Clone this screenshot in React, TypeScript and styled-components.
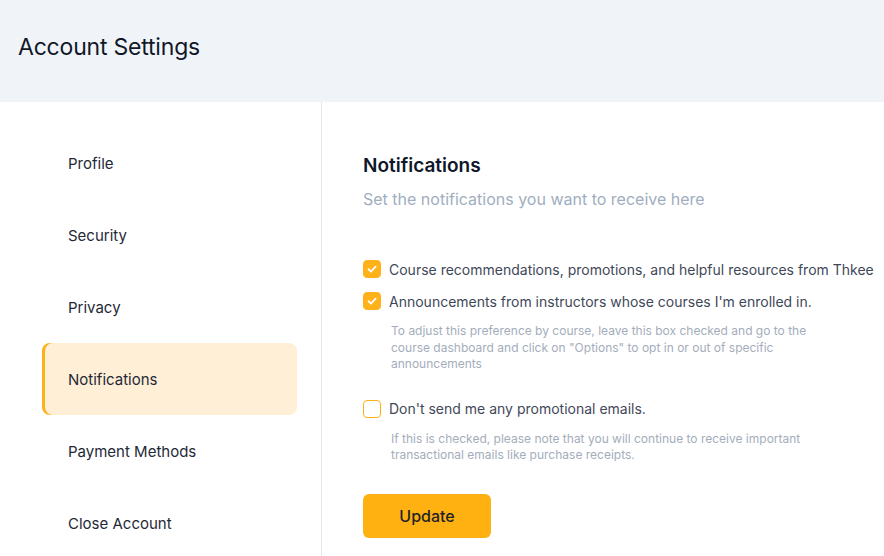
import { useState } from "react";
import styled, { createGlobalStyle } from "styled-components";

const GlobalStyle = createGlobalStyle`
    html, body {
        margin: 0;
        padding: 0;
        background: #ffffff;
        font-family: Inter, "Noto Sans", sans-serif;
    }
`;

const Page = styled.div`
    width: 884px;
    height: 556px;
    display: flex;
    flex-direction: column;
    overflow: hidden;
`;

const Header = styled.header`
    height: 102px;
    flex-shrink: 0;
    background: #f0f4f9;
    display: flex;
    align-items: center;
    padding-left: 18px;
    box-sizing: border-box;
`;

const Title = styled.h1`
    margin: 0 0 8px;
    font-size: 23px;
    font-weight: 400;
    color: #111827;
    letter-spacing: -0.2px;
`;

const Body = styled.div`
    flex: 1;
    display: flex;
`;

const Sidebar = styled.nav`
    width: 322px;
    flex-shrink: 0;
    border-right: 1px solid #e2e8f0;
    padding: 25px 24px 0 42px;
    box-sizing: border-box;
    display: flex;
    flex-direction: column;
`;

const NavItem = styled.div<{ $active?: boolean }>`
    height: 72px;
    display: flex;
    align-items: center;
    padding-left: 26px;
    border-radius: 8px;
    font-size: 15px;
    color: #1f2937;
    background: ${(p) => (p.$active ? "#ffefd6" : "transparent")};
    box-shadow: ${(p) => (p.$active ? "inset 3px 0 0 #ffb11a" : "none")};
    cursor: pointer;
`;

const Main = styled.main`
    flex: 1;
    padding: 50px 0 0 41px;
`;

const SectionTitle = styled.h2`
    margin: 0;
    font-size: 19px;
    font-weight: 600;
    color: #0f172a;
    line-height: 28px;
`;

const Subtitle = styled.p`
    margin: 8px 0 0;
    font-size: 16px;
    color: #a0aec0;
    line-height: 22px;
`;

const Options = styled.div`
    margin-top: 43px;
    display: flex;
    flex-direction: column;
`;

const OptionRow = styled.label`
    display: flex;
    align-items: center;
    gap: 8px;
    height: 32px;
    font-size: 14px;
    color: #3f4858;
    white-space: nowrap;
    cursor: pointer;
`;

const Box = styled.span<{ $checked: boolean }>`
    width: 18px;
    height: 18px;
    box-sizing: border-box;
    border-radius: 4px;
    flex-shrink: 0;
    display: flex;
    align-items: center;
    justify-content: center;
    background: ${(p) => (p.$checked ? "#ffb11a" : "#ffffff")};
    border: 1.5px solid #ffb11a;
`;

const Help = styled.p<{ $after?: number }>`
    margin: 6px 0 ${(p) => p.$after ?? 0}px 28px;
    width: 432px;
    font-size: 12px;
    line-height: 16.5px;
    color: #a4adbb;
`;

const UpdateButton = styled.button`
    margin-top: 30px;
    width: 128px;
    height: 44px;
    border: none;
    border-radius: 6px;
    background: #ffb111;
    color: #1f2328;
    font-family: Inter, sans-serif;
    font-size: 16px;
    font-weight: 500;
    cursor: pointer;
`;

function Check(props: { checked: boolean; onToggle: () => void }) {
    return (
        <Box $checked={props.checked} onClick={props.onToggle}>
            {props.checked && (
                <svg width="12" height="12" viewBox="0 0 12 12" fill="none">
                    <path d="M2.5 6.2l2.4 2.4L9.6 3.6" stroke="#fff" strokeWidth="1.8" strokeLinecap="round" strokeLinejoin="round" />
                </svg>
            )}
        </Box>
    );
}

const navItems = ["Profile", "Security", "Privacy", "Notifications", "Payment Methods", "Close Account"];

function App() {
    const [opts, setOpts] = useState({ courses: true, announcements: true, noPromo: false });

    return (
        <Page>
            <GlobalStyle />
            <Header>
                <Title>Account Settings</Title>
            </Header>
            <Body>
                <Sidebar>
                    {navItems.map((item) => (
                        <NavItem key={item} $active={item === "Notifications"}>
                            {item}
                        </NavItem>
                    ))}
                </Sidebar>
                <Main>
                    <SectionTitle>Notifications</SectionTitle>
                    <Subtitle>Set the notifications you want to receive here</Subtitle>
                    <Options>
                        <OptionRow>
                            <Check checked={opts.courses} onToggle={() => setOpts({ ...opts, courses: !opts.courses })} />
                            Course recommendations, promotions, and helpful resources from Thkee
                        </OptionRow>
                        <OptionRow>
                            <Check
                                checked={opts.announcements}
                                onToggle={() => setOpts({ ...opts, announcements: !opts.announcements })}
                            />
                            Announcements from instructors whose courses I'm enrolled in.
                        </OptionRow>
                        <Help $after={20}>
                            To adjust this preference by course, leave this box checked and go to the course dashboard and
                            click on "Options" to opt in or out of specific announcements
                        </Help>
                        <OptionRow>
                            <Check checked={opts.noPromo} onToggle={() => setOpts({ ...opts, noPromo: !opts.noPromo })} />
                            Don't send me any promotional emails.
                        </OptionRow>
                        <Help>
                            If this is checked, please note that you will continue to receive important transactional
                            emails like purchase receipts.
                        </Help>
                    </Options>
                    <UpdateButton>Update</UpdateButton>
                </Main>
            </Body>
        </Page>
    );
}

export default App;
